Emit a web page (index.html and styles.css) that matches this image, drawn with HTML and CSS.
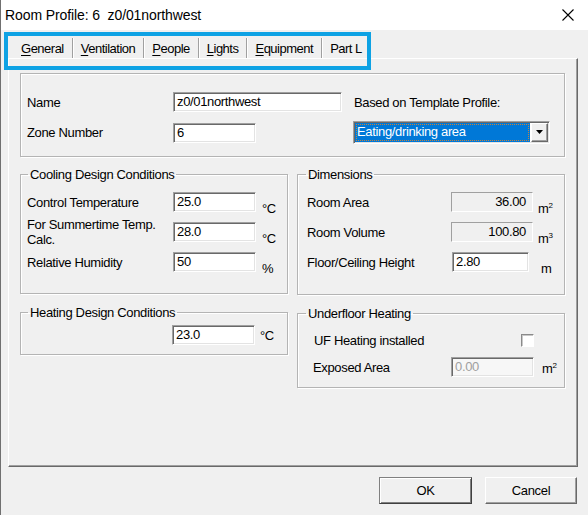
FILE: index.html
```html
<!DOCTYPE html>
<html lang="en">
<head>
  <meta charset="UTF-8" />
  <title>Room Profile</title>
  <link rel="stylesheet" href="styles.css">
</head>
<body>
  <div class="window">
    <div class="titlebar">
      <span class="title">Room Profile: 6&nbsp; z0/01northwest</span>
      <svg class="close" width="12" height="12" viewBox="0 0 12 12">
        <path d="M0.5 0.5 L11.5 11.5 M11.5 0.5 L0.5 11.5" stroke="#000" stroke-width="1.1" fill="none"/>
      </svg>
    </div>

    <div class="client">
      <div class="tabs">
        <span class="tab"><u>G</u>eneral</span>
        <span class="tab"><u>V</u>entilation</span>
        <span class="tab"><u>P</u>eople</span>
        <span class="tab"><u>L</u>ights</span>
        <span class="tab"><u>E</u>quipment</span>
        <span class="tab">Part L</span>
      </div>

      <div class="panel">
        <div class="box general">
          <span class="label">Name</span>
          <span class="field wide">z0/01northwest</span>
          <span class="label">Based on Template Profile:</span>

          <span class="label">Zone Number</span>
          <span class="field">6</span>
          <div class="combo">
            <span class="combo-value"><span class="focus">Eating/drinking area</span></span>
            <span class="combo-btn"><svg width="8" height="5" viewBox="0 0 8 5"><path d="M0 0 H7 L3.5 4 Z" fill="#000"/></svg></span>
          </div>
        </div>

        <div class="cols">
          <div class="col">
            <fieldset class="group left cooling">
              <legend>Cooling Design Conditions</legend>
              <div class="rows">
                <span class="label">Control Temperature</span>
                <span class="field">25.0</span>
                <span class="unit low">°C</span>

                <span class="label two-line">For Summertime Temp.<br>Calc.</span>
                <span class="field">28.0</span>
                <span class="unit low">°C</span>

                <span class="label">Relative Humidity</span>
                <span class="field">50</span>
                <span class="unit low">%</span>
              </div>
            </fieldset>

            <fieldset class="group left heating">
              <legend>Heating Design Conditions</legend>
              <div class="rows">
                <span class="label"></span>
                <span class="field">23.0</span>
                <span class="unit">°C</span>
              </div>
            </fieldset>
          </div>

          <div class="col">
            <fieldset class="group right dims">
              <legend>Dimensions</legend>
              <div class="rows">
                <span class="label">Room Area</span>
                <span class="field readonly">36.00</span>
                <span class="unit low">m<sup>2</sup></span>

                <span class="label">Room Volume</span>
                <span class="field readonly">100.80</span>
                <span class="unit low">m<sup>3</sup></span>

                <span class="label">Floor/Ceiling Height</span>
                <span class="field short">2.80</span>
                <span class="unit low m">m</span>
              </div>
            </fieldset>

            <fieldset class="group right underfloor">
              <legend>Underfloor Heating</legend>
              <div class="rows">
                <span class="label">UF Heating installed</span>
                <span class="checkbox"></span>
                <span class="unit"></span>

                <span class="label">Exposed Area</span>
                <span class="field disabled">0.00</span>
                <span class="unit m">m<sup>2</sup></span>
              </div>
            </fieldset>
          </div>
        </div>
      </div>

      <div class="buttons">
        <span class="btn default">OK</span>
        <span class="btn">Cancel</span>
      </div>
    </div>

    <!-- highlight drawn over the tab strip -->
    <div class="callout"></div>
  </div>
</body>
</html>
```

FILE: styles.css
```css
body {
  margin: 0;
  background: #fff;
  font-family: "Liberation Sans", Arial, sans-serif;
  font-size: 13px;
  letter-spacing: -0.35px;
  color: #000;
}
.window {
  position: relative;
  width: 588px; height: 515px;
  box-sizing: border-box;
  border-left: 1px solid #707070;
  overflow: hidden;
}

/* title bar */
.titlebar {
  height: 30px;
  background: #fff;
  display: flex; align-items: center; justify-content: space-between;
  padding: 0 14px 0 4px;
}
.title { font-size: 14px; letter-spacing: -0.1px; padding-bottom: 1px; }
.close { margin-top: -1px; }

/* client area */
.client {
  background: #f0f0f0;
  height: 485px;
  box-sizing: border-box;
  padding: 2px 10px 0 7px;
}
.tabs {
  display: flex;
  height: 26px;
  box-sizing: border-box;
  padding: 6px 0 0 5px;
  letter-spacing: -0.5px;
}
.tab {
  height: 20px; line-height: 21px;
  padding: 0 8px 0 8px;
  border-right: 1px solid #a0a0a0;
  box-shadow: 1px 0 0 #fff;
}
.tab:last-child { border-right: none; box-shadow: none; }
.tab u { text-decoration-thickness: 1px; text-underline-offset: 2px; }

.panel {
  width: 570px; height: 409px;
  box-sizing: border-box;
  border: 1px solid;
  border-color: #fff #696969 #696969 #fff;
  box-shadow: inset -1px -1px 0 #a0a0a0;
  padding: 14px 12px 0 11px;
}

/* etched boxes */
.box, .group {
  border: 1px solid #b4b4b4;
  box-shadow: 1px 1px 0 #fff, inset 1px 1px 0 #fff;
}
.general {
  height: 84px;
  box-sizing: border-box;
  padding: 18px 6px 0 6px;
  display: grid;
  grid-template-columns: 146px 181px 1fr;
  grid-template-rows: 20px 23px;
  row-gap: 9px;
  align-items: center;
}

.label { line-height: 15px; white-space: nowrap; }

.field {
  height: 20px; line-height: 18px;
  box-sizing: border-box;
  width: 83px;
  padding: 0 3px;
  background: #fff;
  border: 1px solid;
  border-color: #a0a0a0 #fff #fff #a0a0a0;
  box-shadow: inset 1px 1px 0 #696969, inset -1px -1px 0 #e3e3e3;
  white-space: nowrap;
}
.field.wide { width: 169px; }
.field.short { width: 77px; margin-left: 1px; }
.field.readonly {
  width: 82px;
  background: #f0f0f0;
  box-shadow: none;
  text-align: right;
  padding-right: 6px;
}
.field.disabled { background: #f7f7f7; color: #a0a0a0; }

/* drop down */
.combo {
  width: 197px; height: 23px;
  margin-left: -1px;
  box-sizing: border-box;
  display: flex;
  padding: 1px;
  border: 1px solid;
  border-color: #a0a0a0 #fff #fff #a0a0a0;
  box-shadow: inset 1px 1px 0 #696969, inset -1px -1px 0 #e3e3e3;
  background: #fff;
}
.combo-value {
  flex: 1;
  background: #0078d7;
  color: #fff;
  padding: 1px;
}
.focus {
  display: block;
  height: 100%;
  box-sizing: border-box;
  line-height: 16px;
  padding-left: 1px;
  outline: 1px dotted #c8843c;
  outline-offset: -1px;
}
.combo-btn {
  width: 17px;
  margin-left: 1px;
  box-sizing: border-box;
  background: #f0f0f0;
  border: 1px solid;
  border-color: #fff #696969 #696969 #fff;
  box-shadow: inset -1px -1px 0 #a0a0a0;
  display: flex; align-items: center; justify-content: center;
}

/* group boxes */
.cols {
  display: grid;
  grid-template-columns: 268px 268px;
  column-gap: 9px;
  margin-top: 10px;
}
.col { display: flex; flex-direction: column; gap: 11px; }
fieldset.group {
  margin: 0;
  min-inline-size: 0;
}
.group legend {
  line-height: 15px;
  padding: 0 2px;
}
.group.left { padding: 10px 6px 0 6px; }
.group.left legend { margin-left: 1px; }
.group.right { padding: 10px 6px 0 9px; }
.group.right legend { margin-left: -1px; }

.rows {
  display: grid;
  grid-auto-rows: 20px;
  row-gap: 10px;
  align-items: center;
}
.left .rows { grid-template-columns: 146px 83px 1fr; column-gap: 0; }
.left .unit { margin-left: 6px; }
.cooling { height: 127px; box-sizing: border-box; }
.heating { height: 50px; box-sizing: border-box; padding-top: 5px !important; }
.heating .rows { margin-left: -1px; }
.heating .unit { margin-left: 5px; }

.right .rows { grid-template-columns: 144px 82px 1fr; }
.right .unit { margin-left: 5px; }
.dims { height: 128px; box-sizing: border-box; }
.underfloor { height: 82px; box-sizing: border-box; padding-top: 9px !important; }
.underfloor .rows { padding-left: 6px; grid-template-columns: 138px 83px 1fr; row-gap: 7px; }
.underfloor .rows .label:nth-of-type(1) { padding-left: 1px; }

.unit { line-height: 15px; }
.unit.low { align-self: end; margin-bottom: -4px; }
.unit.m { margin-left: 8px !important; }
.unit sup { font-size: 8px; vertical-align: 5px; margin-left: 0; }

.checkbox {
  justify-self: end;
  width: 13px; height: 13px;
  box-sizing: border-box;
  background: #fff;
  border: 1px solid;
  border-color: #8a8a8a #fff #fff #8a8a8a;
  box-shadow: inset 1px 1px 0 #c8c8c8;
}

/* buttons */
.buttons {
  display: flex;
  justify-content: flex-end;
  gap: 13px;
  margin-top: 10px;
  padding-right: 1px;
}
.btn {
  width: 92px; height: 27px;
  box-sizing: border-box;
  display: flex; align-items: center; justify-content: center;
  border: 1px solid;
  border-color: #fff #696969 #696969 #fff;
  box-shadow: inset -1px -1px 0 #a0a0a0;
  background: #f0f0f0;
}
.btn.default {
  width: 93px;
  border-color: #808080 #404040 #404040 #808080;
  box-shadow: inset 1px 1px 0 #fff, inset -1px -1px 0 #808080;
}

/* annotation frame over the tabs */
.callout {
  position: absolute;
  left: 3px; top: 32px;
  width: 367px; height: 38px;
  box-sizing: border-box;
  border: 4px solid #0ea2e4;
}
```
